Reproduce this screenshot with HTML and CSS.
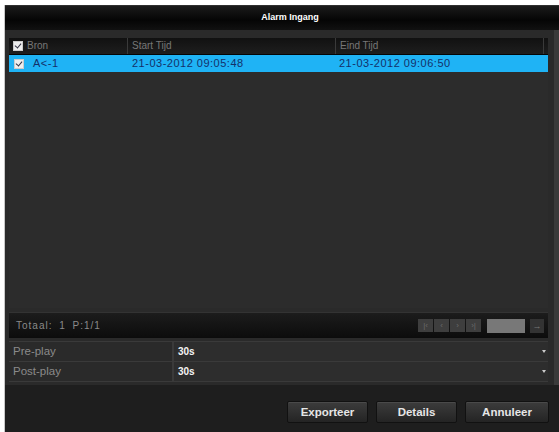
FILE: index.html
```html
<!DOCTYPE html>
<html lang="en">
<head>
    <meta charset="UTF-8">
    <title>Alarm Ingang</title>
    <link rel="stylesheet" href="styles.css">
</head>
<body>
    <div class="window">
        <!-- Title -->
        <div class="titlebar">Alarm Ingang</div>

        <div class="content">
            <!-- Result list -->
            <div class="list">
                <div class="row head">
                    <div class="cell c1"><span class="check"></span>Bron</div>
                    <div class="cell c2">Start Tijd</div>
                    <div class="cell c3">Eind Tijd</div>
                </div>
                <div class="row selected">
                    <div class="cell c1"><span class="check"></span>A&lt;-1</div>
                    <div class="cell c2">21-03-2012 09:05:48</div>
                    <div class="cell c3">21-03-2012 09:06:50</div>
                </div>
                <div class="list-body"></div>
            </div>

            <!-- Pager -->
            <div class="pager">
                <span class="total">Totaal: 1 P:1/1</span>
                <div class="pages">
                    <span class="pg">|&lsaquo;</span><span class="pg">&lsaquo;</span><span class="pg">&rsaquo;</span><span class="pg">&rsaquo;|</span>
                </div>
                <span class="page-input"></span>
                <span class="go">&rarr;</span>
            </div>

            <!-- Play settings -->
            <div class="settings">
                <div class="setting">
                    <div class="label">Pre-play</div>
                    <div class="value">30s<span class="arrow"></span></div>
                </div>
                <div class="setting">
                    <div class="label">Post-play</div>
                    <div class="value">30s<span class="arrow"></span></div>
                </div>
            </div>
        </div>

        <!-- Buttons -->
        <div class="buttons">
            <button class="btn">Exporteer</button>
            <button class="btn">Details</button>
            <button class="btn">Annuleer</button>
        </div>
    </div>
</body>
</html>
```

FILE: styles.css
```css
body {
    margin: 0;
    padding: 5px 0 0 5px;
    background-color: #fff;
    font-family: "Liberation Sans", Arial, sans-serif;
    font-size: 10px;
}

.window {
    width: 554px;
    height: 427px;
    background-color: #1f1f1f;
    display: flex;
    flex-direction: column;
    box-shadow: -1px 0 0 #c8c8c8;
}

.titlebar {
    height: 25px;
    line-height: 24px;
    text-align: center;
    padding-left: 16px;
    color: #fff;
    font-weight: bold;
    font-size: 9px;
    background: linear-gradient(#3a3a3a 0, #1a1a1a 6%, #050505 60%, #111 100%);
}

.content {
    background-color: #2a2a2a;
    padding: 8px 6px 3px 4px;
    border-right: 5px solid #3a3a3a;
}

.list {
    height: 270px;
    display: flex;
    flex-direction: column;
    background-color: #2c2c2c;
}

.row {
    display: flex;
    height: 17px;
    line-height: 17px;
}

.row.head {
    height: 16px;
    line-height: 16px;
    color: #777;
    background: linear-gradient(#111, #1e1e1e);
    border-bottom: 1px solid #050505;
}

.row.selected {
    background-color: #1fb3f5;
    color: #14306a;
    font-size: 11px;
    letter-spacing: 0.5px;
}

.cell {
    padding-left: 4px;
    display: flex;
    align-items: center;
    gap: 4px;
    white-space: nowrap;
}

.row.head .cell {
    border-right: 1px solid #3a3a3a;
}

.c1 { width: 114px; }
.c2 { width: 203px; }
.c3 { width: 203px; }

.row.selected .c1 {
    padding-left: 5px;
    gap: 9px;
}

.check {
    display: inline-block;
    width: 8px;
    height: 8px;
    background-color: #eee;
    border: 1px solid #ccc;
    position: relative;
}

.check::after {
    content: "";
    position: absolute;
    left: 2px;
    top: 0;
    width: 3px;
    height: 5px;
    border: solid #334;
    border-width: 0 1.5px 1.5px 0;
    transform: rotate(40deg);
}

.list-body {
    flex: 1;
}

.pager {
    margin-top: 4px;
    height: 25px;
    display: flex;
    align-items: center;
    padding: 0 4px 0 7px;
    background: linear-gradient(#1c1c1c, #0c0c0c);
    border-top: 1px solid #333;
    color: #8a8a8a;
}

.total {
    flex: 1;
    letter-spacing: 1px;
    word-spacing: 3px;
}

.pages {
    display: flex;
    gap: 1px;
    margin-right: 6px;
}

.pg {
    width: 15px;
    height: 13px;
    line-height: 13px;
    text-align: center;
    background-color: #3e3e3e;
    color: #6a6a6a;
    font-size: 8px;
}

.page-input {
    width: 38px;
    height: 14px;
    background-color: #787878;
    margin-right: 5px;
}

.go {
    width: 14px;
    height: 14px;
    line-height: 14px;
    text-align: center;
    background-color: #333;
    color: #777;
    font-size: 9px;
}

.settings {
    margin-top: 3px;
    border-top: 1px solid #3a3a3a;
    border-bottom: 1px solid #3a3a3a;
}

.setting {
    display: flex;
    height: 19px;
    line-height: 19px;
    border-bottom: 1px solid #3a3a3a;
}

.setting:last-child {
    border-bottom: none;
}

.label {
    width: 159px;
    padding-left: 4px;
    color: #8a8a8a;
    font-size: 11.5px;
    border-right: 2px solid #3a3a3a;
}

.value {
    flex: 1;
    padding-left: 4px;
    color: #f4f4f4;
    font-weight: bold;
    position: relative;
    background-color: #2d2d2d;
}

.arrow {
    position: absolute;
    right: 2px;
    top: 8px;
    width: 0;
    height: 0;
    border-left: 2px solid transparent;
    border-right: 2px solid transparent;
    border-top: 3px solid #ccc;
}

.buttons {
    flex: 1;
    display: flex;
    justify-content: flex-end;
    align-items: center;
    gap: 8px;
    padding: 6px 10px 0 0;
    background-color: #1e1e1e;
}

.btn {
    width: 81px;
    height: 22px;
    font-family: "Liberation Sans", Arial, sans-serif;
    font-size: 11.5px;
    font-weight: bold;
    color: #e6e6e6;
    background: linear-gradient(#3c3c3c, #242424);
    border: 1px solid #111;
    border-radius: 2px;
    box-shadow: inset 0 1px 0 #4a4a4a;
}

.btn:last-child {
    width: 84px;
}
```
